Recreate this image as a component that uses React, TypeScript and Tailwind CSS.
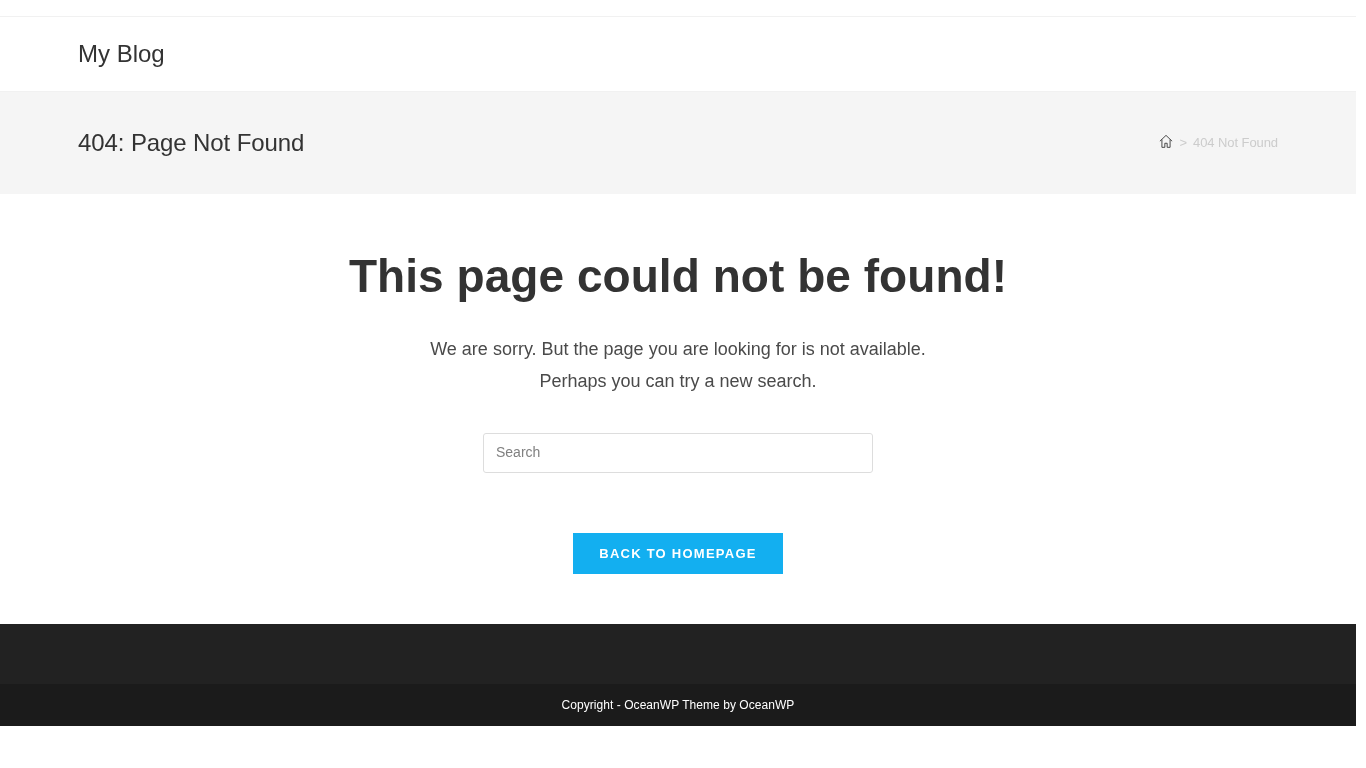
const App = () => {
  return (
    <div className="w-[1356px] font-['Liberation_Sans',Arial,sans-serif] text-[#333] antialiased [text-rendering:optimizeLegibility] [will-change:transform]">
      {/* Top bar */}
      <div className="h-[17px] border-b border-[#f1f1f1]" />

      {/* Header */}
      <header className="h-[74px] px-[78px] flex items-center">
        <a href="#" className="text-[24px] leading-[74px] text-[#333]">My Blog</a>
      </header>

      {/* Page title */}
      <div className="h-[103px] bg-[#f5f5f5] border-t border-[#f1f1f1] px-[78px] flex items-center justify-between">
        <h1 className="text-[24px] leading-[32px] tracking-[-0.1px] text-[#333]">404: Page Not Found</h1>
        <nav className="flex items-center text-[13px] text-[#cccccc]">
          <svg viewBox="0 0 24 24" className="w-[14px] h-[15px] mb-[4px] text-[#333]" fill="none" stroke="currentColor" strokeWidth={1.5} strokeLinejoin="round">
            <path d="M1.5 11.5 12 1.5l10.5 10M5 8.5V22h5v-7h4v7h5V8.5" />
          </svg>
          <span className="ml-[6px] mr-[6px]">&gt;</span>
          <span className="tracking-[-0.08px]">404 Not Found</span>
        </nav>
      </div>

      {/* Content */}
      <main className="flex flex-col items-center pt-[49px] pb-[50px]">
        <h2 className="text-[46px] leading-[66px] tracking-[0.05px] font-bold text-[#333]">This page could not be found!</h2>
        <p className="mt-[24px] text-[18px] leading-[32px] text-[#4a4a4a] text-center">
          We are sorry. But the page you are looking for is not available.
          <br />
          Perhaps you can try a new search.
        </p>
        <input
          type="search"
          placeholder="Search"
          className="mt-[36px] w-[390px] h-[40px] px-[12px] pb-[2px] border border-[#ddd] rounded-[3px] text-[14px] text-[#333] placeholder:text-[#808080] outline-none"
        />
        <a
          href="#"
          className="mt-[60px] w-[210px] h-[41px] flex items-center justify-center bg-[#13aff0] text-white text-[13px] font-bold tracking-[1.25px] uppercase"
        >
          Back to Homepage
        </a>
      </main>

      {/* Footer */}
      <footer>
        <div className="h-[60px] bg-[#222]" />
        <div className="h-[42px] bg-[#1b1b1b] flex items-center justify-center text-[12px] tracking-[0.05px] text-white">
          Copyright - OceanWP Theme by OceanWP
        </div>
      </footer>
    </div>
  );
};

export default App;
